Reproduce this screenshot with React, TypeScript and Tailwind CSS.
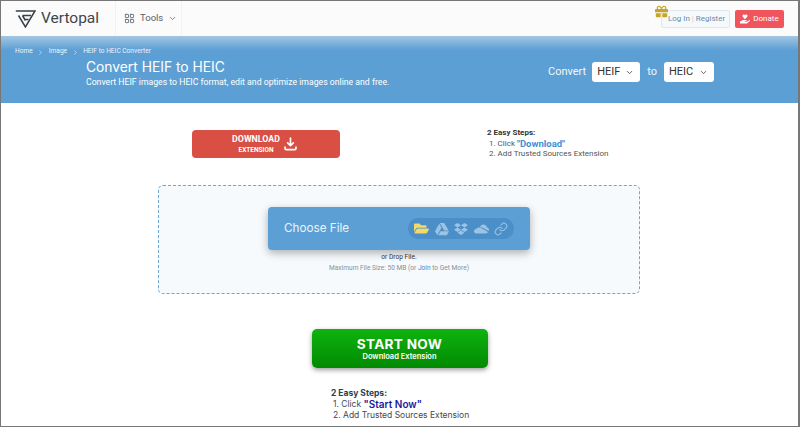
import { ChevronDown, ChevronRight, LayoutGrid, Link } from "lucide-react";
import { FaDropbox, FaFolderOpen, FaGift, FaGoogleDrive, FaHandHoldingHeart } from "react-icons/fa";

function Logo() {
  return (
    <svg width="21" height="18" viewBox="0 0 21 18" fill="none" stroke="#39404a" strokeWidth="1.5">
      <path d="M0.8 1H20L10.4 17L3.5 5.5" />
      <path d="M7.5 5.5H16M9.5 9.5H13.5M7.5 5.5L10.4 10.5" />
    </svg>
  );
}

function OneDrive() {
  return (
    <svg width="15" height="10" viewBox="0 0 15 10" fill="currentColor">
      <path d="M5.8 3.2C6.5 1.5 8 .6 9.4 .6C11 .6 12.4 1.7 12.8 3.3C14 3.5 15 4.6 15 5.8C15 6.3 14.8 6.8 14.6 7.1L9.1 3.9C8 3.2 6.9 3 5.8 3.2Z" />
      <path d="M0 7.5C0 6.1 1 5 2.3 4.8C3.2 3.7 5 3.1 6.6 3.7C7.3 3.9 7.9 4.3 8.5 4.7L14 8C13.6 8.8 12.8 9.4 11.8 9.4H2.2C1 9.4 0 8.6 0 7.5Z" />
    </svg>
  );
}

function FormatSelect({ label, width }: { label: string; width: string }) {
  return (
    <div className={`${width} flex h-5 items-center justify-between rounded-[3px] bg-white pl-[5px] pr-[6px] text-[11px] text-[#333]`}>
      <span>{label}</span>
      <ChevronDown size={9} strokeWidth={2} />
    </div>
  );
}

function DownloadIcon() {
  return (
    <svg width="13" height="14" viewBox="0 0 13 14" fill="none" stroke="white" strokeWidth="1.7" strokeLinecap="round" strokeLinejoin="round">
      <path d="M6.5 1V8.5M3.6 5.8L6.5 8.6L9.4 5.8" />
      <path d="M1 10.2V11.2C1 12 1.6 12.6 2.4 12.6H10.6C11.4 12.6 12 12 12 11.2V10.2" />
    </svg>
  );
}

export default function App() {
  return (
    <div className="flex h-[427px] w-[800px] flex-col overflow-hidden border-y border-l border-r-2 border-[#777] bg-white font-['Roboto',sans-serif]">
      <header className="flex h-[35px] shrink-0 items-center bg-[#fbfbfb] pl-[14px] pr-[14px]">
        <Logo />
        <span className="ml-[5px] w-[60px] text-[15.5px] text-[#3f454d]">Vertopal</span>
        <div className="ml-[14px] flex h-[35px] w-[67px] items-center border-x border-[#f2f2f2] pl-[8px] text-[#56616d]">
          <LayoutGrid size={11} strokeWidth={1.8} />
          <span className="ml-[5px] text-[9.5px]">Tools</span>
          <ChevronDown size={9} strokeWidth={2} className="ml-[5px]" />
        </div>
        <div className="relative ml-auto flex h-[18px] w-[69px] items-center justify-center rounded-[2px] border border-[#dfe8ef] bg-[#f6f9fb] pl-[2px] text-[8px] text-[#6a8ba8]">
          <FaGift size={13} className="absolute -left-[7px] -top-[6px] text-[#c8a52a]" />
          <span>Log In</span>
          <span className="mx-[2px] text-[#c4d4e0]">|</span>
          <span>Register</span>
        </div>
        <div className="ml-[5px] flex h-[18px] w-[49px] items-center justify-center gap-[3px] rounded-[2px] bg-[#f0545c] text-[8px] text-white">
          <FaHandHoldingHeart size={10} />
          <span>Donate</span>
        </div>
      </header>

      <section className="h-[67px] shrink-0 bg-[linear-gradient(to_bottom,#a3c6e3_0px,#5d9fd5_14px,#5b9fd4_100%)] pt-[11px] text-white">
        <nav className="flex h-[10px] items-center pl-[14px] text-[6.6px] text-[#eef5fb]">
          <span>Home</span>
          <ChevronRight size={7} strokeWidth={2} className="mx-[4.5px]" />
          <span>Image</span>
          <ChevronRight size={7} strokeWidth={2} className="mx-[4.5px]" />
          <span>HEIF to HEIC Converter</span>
        </nav>
        <div className="flex items-start">
          <div className="ml-[85px] w-[462px]">
            <h1 className="mt-[1px] font-['Inter',sans-serif] text-[13.8px] leading-[18px] font-normal">Convert HEIF to HEIC</h1>
            <p className="text-[8.7px] leading-[12px]">Convert HEIF images to HEIC format, edit and optimize images online and free.</p>
          </div>
          <div className="flex items-center pt-[5px] text-[11px]">
            <span className="mr-[6px] text-[#f2f7fb]">Convert</span>
            <FormatSelect label="HEIF" width="w-[48px]" />
            <span className="mx-[7px] text-[#f2f7fb]">to</span>
            <FormatSelect label="HEIC" width="w-[50px]" />
          </div>
        </div>
      </section>

      <main className="flex min-h-0 flex-1 flex-col items-center">
        <div className="ml-[191px] mt-[27px] flex w-[448px] self-start">
          <div className="flex h-[28px] w-[148px] items-center justify-center gap-[4px] rounded-[4px] bg-[#d94f43] pr-[3px] text-white">
            <div className="flex flex-col items-center font-bold">
              <span className="text-[8.8px] leading-[12px]">DOWNLOAD</span>
              <span className="text-[6.5px] leading-[10px]">EXTENSION</span>
            </div>
            <DownloadIcon />
          </div>
          <div className="ml-[147px] -mt-[2px] text-[8px] leading-[10px] text-[#555]">
            <div className="font-bold text-[#333]">2 Easy Steps:</div>
            <div className="ml-[2px] mt-[1px] flex items-center">
              <span>1. Click&nbsp;</span>
              <span className="text-[9.5px] font-bold text-[#3f8fd6]">"Download"</span>
            </div>
            <div className="ml-[2px]">2. Add Trusted Sources Extension</div>
          </div>
        </div>

        <div className="ml-[-1px] mt-[26px] flex h-[109px] w-[482px] flex-col items-center rounded-[5px] border border-dashed border-[#69a7d8] bg-[#f6fafd] pt-[21px]">
          <div className="flex h-[43px] w-[262px] items-center justify-between rounded-[4px] bg-[#5b9fd4] pl-[16px] pr-[16px] shadow-[0_3px_8px_rgba(0,0,0,0.3)]">
            <span className="font-['Inter',sans-serif] text-[11.7px] text-[#eaf3fa]">Choose File</span>
            <div className="flex h-[21px] w-[106px] items-center justify-between rounded-full bg-[#4a8fc8] px-[6px] text-[#9cc3e4]">
              <FaFolderOpen size={15} className="text-[#f3d86b]" />
              <FaGoogleDrive size={14} />
              <FaDropbox size={14} />
              <OneDrive />
              <Link size={14} strokeWidth={1.8} />
            </div>
          </div>
          <div className="mt-[2px] text-[6.6px] leading-[10px] text-[#333]">or Drop File.</div>
          <div className="mt-[1px] text-[6.6px] leading-[10px] text-[#8a8f94]">
            Maximum File Size: 50 MB (or <span className="text-[#4f7fc4]">Join</span> to Get More)
          </div>
        </div>

        <div className="mt-[35px] flex h-[39px] w-[176px] flex-col items-center justify-center rounded-[5px] bg-[linear-gradient(to_bottom,#0fb30f,#018a01)] text-white shadow-[0_2px_5px_rgba(0,0,0,0.4)]">
          <span className="font-['Inter',sans-serif] text-[13.6px] leading-[16px] font-bold tracking-[0.3px]">START NOW</span>
          <span className="font-['Inter',sans-serif] text-[7.5px] leading-[10px] font-semibold">Download Extension</span>
        </div>

        <div className="ml-[330px] mt-[20px] self-start font-['Inter',sans-serif] text-[8.5px] leading-[11px] text-[#3c4a58]">
          <div className="font-bold text-[#2c3e50]">2 Easy Steps:</div>
          <div className="ml-[2px] flex items-center">
            <span>1. Click&nbsp;</span>
            <span className="text-[10px] font-semibold text-[#1a1a9c]">"Start Now"</span>
          </div>
          <div className="ml-[2px]">2. Add Trusted Sources Extension</div>
        </div>
      </main>
    </div>
  );
}
